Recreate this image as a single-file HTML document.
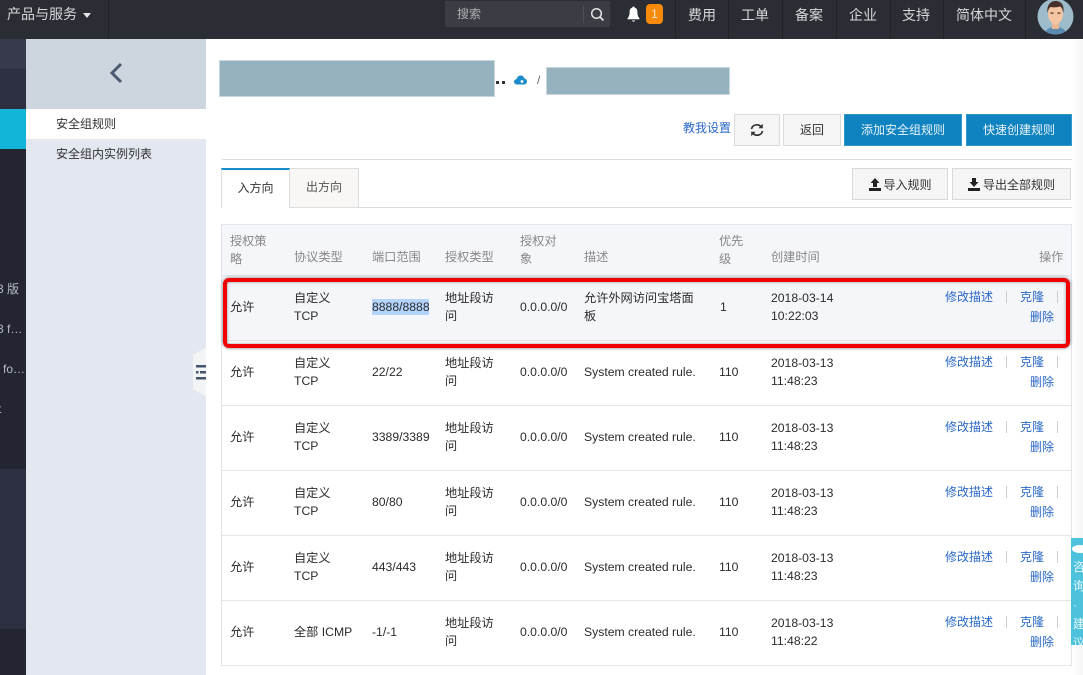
<!DOCTYPE html>
<html lang="zh-CN"><head><meta charset="utf-8"><title>安全组规则</title>
<style>
*{box-sizing:border-box}
html,body{margin:0;padding:0;width:1083px;height:675px;overflow:hidden;background:#fff;font-family:"Liberation Sans","Noto Sans CJK SC",sans-serif;font-size:12px;color:#333}
.a{position:absolute;white-space:nowrap}
#top{left:0;top:0;width:1083px;height:39px;background:#2a2d33}
.sep{position:absolute;top:0;width:1px;height:39px;background:#202227}
.nav{position:absolute;top:5px;font-size:14px;line-height:20px;color:#d6d8da;white-space:nowrap}
.btn{position:absolute;border:1px solid #d9d9d9;background:#f5f5f5;color:#333;text-align:center;font-size:12px;white-space:nowrap}
.blue{background:#0f83bf;border-color:#3497c9;color:#e8f3f9;height:32px;top:114px;line-height:30px}
.t{position:absolute;font-size:12.2px;line-height:18px;color:#2b2b2b;white-space:nowrap}
.h{color:#888}
.l{position:absolute;left:222px;width:849px;height:1px;background:#e2e5ea}
.lk{position:absolute;color:#2a68c7;font-size:12px;line-height:18px;white-space:nowrap}
.bar{position:absolute;width:1px;height:12px;background:#ccc}
</style></head><body>
<div class="a" id="top"></div>
<div class="nav" style="left:7px;top:4px">产品与服务</div>
<div class="a" style="left:83px;top:13px;width:0;height:0;border-left:4.5px solid transparent;border-right:4.5px solid transparent;border-top:5px solid #e5e5e5"></div>
<div class="sep" style="left:108px"></div>
<div class="a" style="left:445px;top:1px;width:165px;height:26px;background:#3a3d43"></div>
<div class="a" style="left:457px;top:6px;font-size:12px;line-height:17px;color:#aeb0b3">搜索</div>
<div class="a" style="left:583px;top:6px;width:1px;height:17px;background:#4c4f55"></div>
<svg class="a" style="left:590px;top:7px" width="15" height="15" viewBox="0 0 15 15"><circle cx="6.5" cy="6.5" r="4.8" fill="none" stroke="#e3e4e5" stroke-width="1.5"/><path d="M10 10l3.5 3.5" stroke="#e3e4e5" stroke-width="1.7"/></svg>
<svg class="a" style="left:627px;top:6px" width="13" height="17" viewBox="0 0 13 17"><path d="M6.5 0.5c.8 0 1.1.5 1.1 1.1 2 .5 2.8 2 2.8 4 0 3.5.6 5 2.1 6.8v.9H.5v-.9C2 10.600 2.600 9.100 2.600 5.600c0-2 .8-3.500 2.800-4 0-.6.3-1.100 1.100-1.100z" fill="#fff"/><path d="M5 14.500h3c0 1.500-3 1.500-3 0z" fill="#fff"/></svg>
<div class="a" style="left:646px;top:4px;width:17px;height:20px;background:#f78a09;border-radius:4px;color:#fbe6cc;text-align:center;line-height:20px;font-size:12px">1</div>
<div class="sep" style="left:675px"></div><div class="sep" style="left:728px"></div><div class="sep" style="left:782px"></div><div class="sep" style="left:836px"></div><div class="sep" style="left:890px"></div><div class="sep" style="left:943px"></div><div class="sep" style="left:1025px"></div>
<div class="nav" style="left:688px">费用</div><div class="nav" style="left:741px">工单</div><div class="nav" style="left:795px">备案</div><div class="nav" style="left:849px">企业</div><div class="nav" style="left:902px">支持</div><div class="nav" style="left:956px">简体中文</div>
<svg class="a" style="left:1037px;top:-2px" width="37" height="37" viewBox="0 0 37 37"><defs><clipPath id="c"><circle cx="18.500" cy="18.500" r="18"/></clipPath></defs><g clip-path="url(#c)"><rect width="37" height="37" fill="#9dbccb"/><path d="M7 37c1-6 6-8 11.500-8S29 31 30 37z" fill="#5b8bb0"/><rect x="15" y="23" width="7" height="8" fill="#e9b794"/><ellipse cx="18.500" cy="16" rx="7.500" ry="10.500" fill="#f3c5a3"/><path d="M10.500 15c-1-8 3-12 8-12s9 3 8 12c-1-4-2-6-3.500-6.500-3 1-7 1-9.500.5-1.500 1-2.500 3-3 6z" fill="#4a302a"/><rect x="13.500" y="14.500" width="3" height="1.200" fill="#4a302a"/><rect x="20.500" y="14.500" width="3" height="1.200" fill="#4a302a"/></g></svg>

<div class="a" style="left:0;top:39px;width:26px;height:636px;background:#232632"></div>
<div class="a" style="left:0;top:39px;width:26px;height:30px;background:#363a4b"></div>
<div class="a" style="left:0;top:69px;width:26px;height:40px;background:#2c3041"></div>
<div class="a" style="left:0;top:109px;width:26px;height:40px;background:#12b5d8"></div>
<div class="a" style="left:0;top:469px;width:26px;height:160px;background:#2c3040"></div>
<div class="a" style="left:-3px;top:281px;font-size:12px;line-height:16px;color:#b8bbc2">3 版</div>
<div class="a" style="left:-3px;top:321px;font-size:12px;line-height:16px;color:#b8bbc2">3 f…</div>
<div class="a" style="left:3px;top:361px;font-size:12px;line-height:16px;color:#b8bbc2">fo…</div>
<div class="a" style="left:-2px;top:401px;font-size:12px;line-height:16px;color:#b8bbc2">t</div>

<div class="a" style="left:26px;top:39px;width:180px;height:636px;background:#e3e7f0"></div>
<div class="a" style="left:26px;top:39px;width:180px;height:70px;background:#cdd5de"></div>
<svg class="a" style="left:108px;top:62px" width="16" height="22" viewBox="0 0 16 22"><path d="M13 2L4 11l9 9" fill="none" stroke="#4a5a70" stroke-width="3"/></svg>
<div class="a" style="left:26px;top:109px;width:180px;height:30px;background:#fff"></div>
<div class="a" style="left:56px;top:116px;line-height:17px;color:#333">安全组规则</div>
<div class="a" style="left:56px;top:146px;line-height:17px;color:#333">安全组内实例列表</div>
<svg class="a" style="left:193px;top:347px" width="13" height="50" viewBox="0 0 13 50"><path d="M13 0L0 8v34l13 8z" fill="#f3f4f6"/><rect x="3" y="18" width="10" height="2.500" fill="#44556e"/><rect x="3" y="24" width="2.500" height="2.500" fill="#44556e"/><rect x="7" y="24" width="6" height="2.500" fill="#44556e"/><rect x="3" y="30" width="10" height="2.500" fill="#44556e"/></svg>

<div class="a" style="left:219px;top:60px;width:276px;height:37px;background:#96b2bf;border:1px solid #c8d7df"></div>
<div class="a" style="left:496px;top:81px;width:3px;height:3px;background:#333"></div>
<div class="a" style="left:502px;top:81px;width:3px;height:3px;background:#333"></div>
<svg class="a" style="left:514px;top:75px" width="13" height="10" viewBox="0 0 13 10"><path d="M3 9.500C1 9.500 0 8 0 6.800 0 5.300 1.200 4.300 2.500 4.300 3 2 4.700 0.500 6.700 0.500c1.800 0 3.300 1.300 3.600 3 1.500.2 2.700 1.400 2.700 3 0 1.700-1.300 3-3 3z" fill="#1a8ccb"/><circle cx="8" cy="6.500" r="1.400" fill="#fff"/></svg>
<div class="a" style="left:537px;top:72px;line-height:16px;color:#666">/</div>
<div class="a" style="left:546px;top:67px;width:184px;height:28px;background:#96b2bf;border:1px solid #c8d7df"></div>

<div class="a" style="left:683px;top:120px;line-height:17px;color:#2a68c7">教我设置</div>
<div class="btn" style="left:734px;top:114px;width:46px;height:32px"></div>
<svg class="a" style="left:750px;top:123px" width="14" height="14" viewBox="0 0 14 14"><path d="M1.500 6C2 3.500 4.200 1.800 7 1.800c1.700 0 3 .7 4 1.800" fill="none" stroke="#333" stroke-width="1.700"/><path d="M12.800 0.800v4.400H8.400z" fill="#333"/><path d="M12.500 8C12 10.500 9.800 12.200 7 12.200c-1.700 0-3-.7-4-1.800" fill="none" stroke="#333" stroke-width="1.700"/><path d="M1.200 13.200V8.800h4.400z" fill="#333"/></svg>
<div class="btn" style="left:783px;top:114px;width:58px;height:32px;line-height:30px">返回</div>
<div class="btn blue" style="left:844px;width:118px">添加安全组规则</div>
<div class="btn blue" style="left:966px;width:106px">快速创建规则</div>

<div class="a" style="left:222px;top:159px;width:850px;height:1px;background:#dcdcdc"></div>
<div class="a" style="left:221px;top:207px;width:851px;height:1px;background:#dcdcdc"></div>
<div class="a" style="left:221px;top:168px;width:69px;height:40px;background:#fff;border-left:1px solid #ddd;border-right:1px solid #ddd;border-top:2px solid #1a8ccb;text-align:center;line-height:37px;color:#333">入方向</div>
<div class="a" style="left:290px;top:168px;width:69px;height:40px;background:#f8f7f5;border:1px solid #ddd;border-left:0;text-align:center;line-height:37px;color:#555">出方向</div>
<div class="btn" style="left:852px;top:168px;width:96px;height:32px;line-height:32px;padding-left:15px">导入规则</div>
<svg class="a" style="left:869px;top:178px" width="12" height="13" viewBox="0 0 12 13"><path d="M6 0l4.500 5H8v4H4V5H1.500z" fill="#222"/><rect x="0" y="10" width="12" height="3" fill="#222"/></svg>
<div class="btn" style="left:952px;top:168px;width:119px;height:32px;line-height:32px;padding-left:15px">导出全部规则</div>
<svg class="a" style="left:968px;top:178px" width="12" height="13" viewBox="0 0 12 13"><path d="M6 9L1.500 4H4V0h4v4h2.500z" fill="#222"/><rect x="0" y="10" width="12" height="3" fill="#222"/></svg>

<div class="a" style="left:1072px;top:40px;width:11px;height:635px;background:linear-gradient(90deg,#fff,#f5f5f5)"></div>

<div class="a" style="left:221px;top:224px;width:851px;height:442px;border:1px solid #e2e5ea"></div>
<div class="a" style="left:222px;top:225px;width:849px;height:50px;background:#f5f6fa"></div>
<div class="a" style="left:222px;top:276px;width:849px;height:64px;background:#f5f6fa"></div>
<div class="l" style="top:275px"></div><div class="l" style="top:340px"></div><div class="l" style="top:405px"></div><div class="l" style="top:470px"></div><div class="l" style="top:535px"></div><div class="l" style="top:600px"></div>

<div class="t h" style="left:230px;top:232px">授权策<br>略</div>
<div class="t h" style="left:294px;top:248px">协议类型</div>
<div class="t h" style="left:372px;top:248px">端口范围</div>
<div class="t h" style="left:445px;top:248px">授权类型</div>
<div class="t h" style="left:520px;top:232px">授权对<br>象</div>
<div class="t h" style="left:584px;top:248px">描述</div>
<div class="t h" style="left:719px;top:232px">优先<br>级</div>
<div class="t h" style="left:771px;top:248px">创建时间</div>
<div class="t h" style="left:1039px;top:248px">操作</div>

<!-- row 1 -->
<div class="t" style="left:230px;top:298px">允许</div>
<div class="t" style="left:294px;top:289px">自定义<br>TCP</div>
<div class="a" style="left:372px;top:299px;width:57px;height:16px;background:#b3d4fc"></div>
<div class="t" style="left:372px;top:298px">8888/8888</div>
<div class="t" style="left:445px;top:289px">地址段访<br>问</div>
<div class="t" style="left:520px;top:298px">0.0.0.0/0</div>
<div class="t" style="left:584px;top:289px">允许外网访问宝塔面<br>板</div>
<div class="t" style="left:720px;top:298px">1</div>
<div class="t" style="left:771px;top:289px">2018-03-14<br>10:22:03</div>
<div class="lk" style="left:945px;top:288px">修改描述</div><div class="bar" style="left:1006px;top:291px"></div><div class="lk" style="left:1020px;top:288px">克隆</div><div class="bar" style="left:1057px;top:291px"></div><div class="lk" style="left:1030px;top:308px">删除</div>
<!-- row 2 -->
<div class="t" style="left:230px;top:363px">允许</div>
<div class="t" style="left:294px;top:354px">自定义<br>TCP</div>
<div class="t" style="left:372px;top:363px">22/22</div>
<div class="t" style="left:445px;top:354px">地址段访<br>问</div>
<div class="t" style="left:520px;top:363px">0.0.0.0/0</div>
<div class="t" style="left:584px;top:363px">System created rule.</div>
<div class="t" style="left:719px;top:363px">110</div>
<div class="t" style="left:771px;top:354px">2018-03-13<br>11:48:23</div>
<div class="lk" style="left:945px;top:353px">修改描述</div><div class="bar" style="left:1006px;top:356px"></div><div class="lk" style="left:1020px;top:353px">克隆</div><div class="bar" style="left:1057px;top:356px"></div><div class="lk" style="left:1030px;top:373px">删除</div>
<!-- row 3 -->
<div class="t" style="left:230px;top:428px">允许</div>
<div class="t" style="left:294px;top:419px">自定义<br>TCP</div>
<div class="t" style="left:372px;top:428px">3389/3389</div>
<div class="t" style="left:445px;top:419px">地址段访<br>问</div>
<div class="t" style="left:520px;top:428px">0.0.0.0/0</div>
<div class="t" style="left:584px;top:428px">System created rule.</div>
<div class="t" style="left:719px;top:428px">110</div>
<div class="t" style="left:771px;top:419px">2018-03-13<br>11:48:23</div>
<div class="lk" style="left:945px;top:418px">修改描述</div><div class="bar" style="left:1006px;top:421px"></div><div class="lk" style="left:1020px;top:418px">克隆</div><div class="bar" style="left:1057px;top:421px"></div><div class="lk" style="left:1030px;top:438px">删除</div>
<!-- row 4 -->
<div class="t" style="left:230px;top:493px">允许</div>
<div class="t" style="left:294px;top:484px">自定义<br>TCP</div>
<div class="t" style="left:372px;top:493px">80/80</div>
<div class="t" style="left:445px;top:484px">地址段访<br>问</div>
<div class="t" style="left:520px;top:493px">0.0.0.0/0</div>
<div class="t" style="left:584px;top:493px">System created rule.</div>
<div class="t" style="left:719px;top:493px">110</div>
<div class="t" style="left:771px;top:484px">2018-03-13<br>11:48:23</div>
<div class="lk" style="left:945px;top:483px">修改描述</div><div class="bar" style="left:1006px;top:486px"></div><div class="lk" style="left:1020px;top:483px">克隆</div><div class="bar" style="left:1057px;top:486px"></div><div class="lk" style="left:1030px;top:503px">删除</div>
<!-- row 5 -->
<div class="t" style="left:230px;top:558px">允许</div>
<div class="t" style="left:294px;top:549px">自定义<br>TCP</div>
<div class="t" style="left:372px;top:558px">443/443</div>
<div class="t" style="left:445px;top:549px">地址段访<br>问</div>
<div class="t" style="left:520px;top:558px">0.0.0.0/0</div>
<div class="t" style="left:584px;top:558px">System created rule.</div>
<div class="t" style="left:719px;top:558px">110</div>
<div class="t" style="left:771px;top:549px">2018-03-13<br>11:48:23</div>
<div class="lk" style="left:945px;top:548px">修改描述</div><div class="bar" style="left:1006px;top:551px"></div><div class="lk" style="left:1020px;top:548px">克隆</div><div class="bar" style="left:1057px;top:551px"></div><div class="lk" style="left:1030px;top:568px">删除</div>
<!-- row 6 -->
<div class="t" style="left:230px;top:623px">允许</div>
<div class="t" style="left:294px;top:623px">全部 ICMP</div>
<div class="t" style="left:372px;top:623px">-1/-1</div>
<div class="t" style="left:445px;top:614px">地址段访<br>问</div>
<div class="t" style="left:520px;top:623px">0.0.0.0/0</div>
<div class="t" style="left:584px;top:623px">System created rule.</div>
<div class="t" style="left:719px;top:623px">110</div>
<div class="t" style="left:771px;top:614px">2018-03-13<br>11:48:22</div>
<div class="lk" style="left:945px;top:613px">修改描述</div><div class="bar" style="left:1006px;top:616px"></div><div class="lk" style="left:1020px;top:613px">克隆</div><div class="bar" style="left:1057px;top:616px"></div><div class="lk" style="left:1030px;top:633px">删除</div>

<div class="a" style="left:223px;top:278px;width:847px;height:70px;border:4px solid #f00000;border-radius:6px;box-shadow:0 0 3px rgba(0,0,0,.55),inset 0 0 3px rgba(0,0,0,.4)"></div>

<div class="a" style="left:1071px;top:538px;width:12px;height:107px;background:#4dc2dc;overflow:hidden">
<div style="position:absolute;left:1px;top:7px;width:16px;height:8px;background:#fff;border-radius:50%"></div>
<div style="position:absolute;left:2px;top:20px;width:14px;font-size:12px;line-height:19px;color:#e8f8fb;white-space:normal">咨<br>询<br>·<br>建<br>议</div>
</div>
</body></html>
